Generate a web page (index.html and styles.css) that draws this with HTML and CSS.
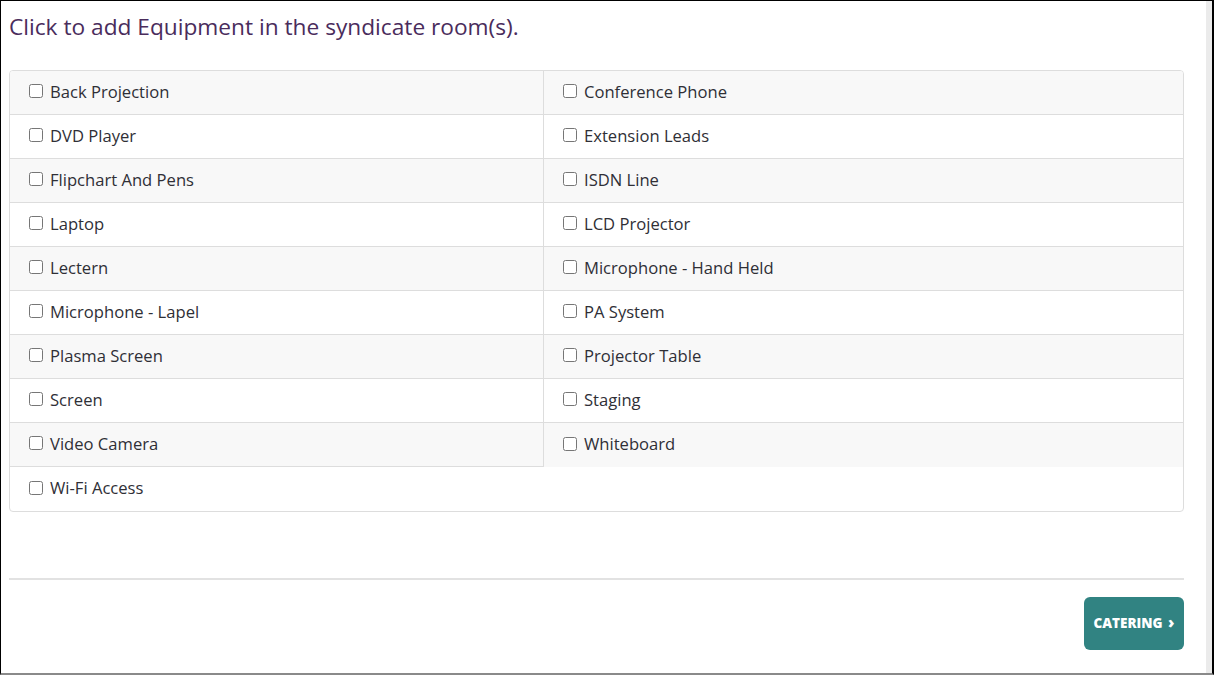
FILE: index.html
```html
<!DOCTYPE html>
<html lang="en">
<head>
    <meta charset="UTF-8">
    <meta name="viewport" content="width=device-width, initial-scale=1.0">
    <title>Syndicate Room Equipment</title>
    <link rel="stylesheet" href="styles.css">
</head>
<body>
    <div class="frame">
        <main class="page">
            <h1>Click to add Equipment in the syndicate room(s).</h1>

            <section class="equipment-list">
                <label class="item stripe"><input type="checkbox"> Back Projection</label>
                <label class="item stripe"><input type="checkbox"> Conference Phone</label>
                <label class="item"><input type="checkbox"> DVD Player</label>
                <label class="item"><input type="checkbox"> Extension Leads</label>
                <label class="item stripe"><input type="checkbox"> Flipchart And Pens</label>
                <label class="item stripe"><input type="checkbox"> ISDN Line</label>
                <label class="item"><input type="checkbox"> Laptop</label>
                <label class="item"><input type="checkbox"> LCD Projector</label>
                <label class="item stripe"><input type="checkbox"> Lectern</label>
                <label class="item stripe"><input type="checkbox"> Microphone - Hand Held</label>
                <label class="item"><input type="checkbox"> Microphone - Lapel</label>
                <label class="item"><input type="checkbox"> PA System</label>
                <label class="item stripe"><input type="checkbox"> Plasma Screen</label>
                <label class="item stripe"><input type="checkbox"> Projector Table</label>
                <label class="item"><input type="checkbox"> Screen</label>
                <label class="item"><input type="checkbox"> Staging</label>
                <label class="item stripe"><input type="checkbox"> Video Camera</label>
                <label class="item stripe no-line"><input type="checkbox"> Whiteboard</label>
                <label class="item last"><input type="checkbox"> Wi-Fi Access</label>
            </section>

            <hr class="divider">

            <div class="actions">
                <button class="next-btn">CATERING <span class="chev">&rsaquo;</span></button>
            </div>
        </main>
        <div class="scroll-strip"></div>
    </div>
</body>
</html>
```

FILE: styles.css
```css
* {
    box-sizing: border-box;
    margin: 0;
    padding: 0;
}

body {
    font-family: 'Open Sans', 'Lato', sans-serif;
    background-color: #fff;
    color: #333;
}

.frame {
    display: flex;
    height: 675px;
    border-top: 1px solid #000;
    border-left: 1px solid #000;
    border-right: 2px solid #000;
    border-bottom: 2px solid #8a8a8a;
    overflow: hidden;
}

.page {
    flex: 1;
    padding: 0 22px 0 8px;
}

.scroll-strip {
    width: 6px;
    background-color: #ebebeb;
}

h1 {
    font-size: 22.7px;
    font-weight: 400;
    color: #4a2c5c;
    line-height: 26px;
    margin: 13px 0 0;
}

.equipment-list {
    display: grid;
    grid-template-columns: 534px 1fr;
    margin-top: 30px;
    border: 1px solid #ddd;
    border-radius: 4px;
    overflow: hidden;
}

.item {
    display: flex;
    align-items: center;
    gap: 7px;
    height: 44px;
    padding-left: 19px;
    padding-bottom: 3px;
    font-size: 16.6px;
    color: #2f2f36;
    border-bottom: 1px solid #ddd;
    cursor: pointer;
}

.item:nth-child(odd) {
    border-right: 1px solid #ddd;
}

.item.stripe {
    background-color: #f8f8f8;
}

.item.no-line {
    border-bottom: none;
}

.item.last {
    border-right: none;
    border-bottom: none;
}

.item input {
    width: 14px;
    height: 14px;
    margin: 0;
}

.divider {
    border: none;
    border-top: 2px solid #e2e2e2;
    margin-top: 66px;
}

.actions {
    display: flex;
    justify-content: flex-end;
    margin-top: 17px;
}

.next-btn {
    font-family: 'Open Sans', sans-serif;
    font-weight: 800;
    font-size: 13.5px;
    width: 100px;
    height: 53px;
    padding-bottom: 3px;
    background-color: #318382;
    color: #fff;
    border: none;
    border-radius: 6px;
    cursor: pointer;
}

.next-btn .chev {
    font-size: 16px;
    margin-left: 2px;
}
```
